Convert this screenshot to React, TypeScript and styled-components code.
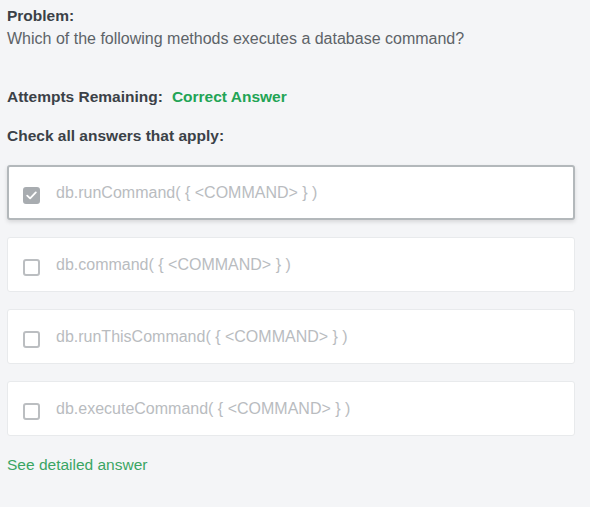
import React from 'react';
import styled, { createGlobalStyle } from 'styled-components';

const GlobalStyle = createGlobalStyle`
  html, body {
    margin: 0;
    padding: 0;
    background: #f4f5f7;
  }
  body {
    font-family: "Liberation Sans", Arial, sans-serif;
  }
`;

interface Option {
  id: string;
  label: string;
  checked: boolean;
}

const options: Option[] = [
  { id: 'a', label: 'db.runCommand( { <COMMAND> } )', checked: true },
  { id: 'b', label: 'db.command( { <COMMAND> } )', checked: false },
  { id: 'c', label: 'db.runThisCommand( { <COMMAND> } )', checked: false },
  { id: 'd', label: 'db.executeCommand( { <COMMAND> } )', checked: false },
];

const Page = styled.div`
  width: 590px;
  height: 507px;
  box-sizing: border-box;
  padding: 6px 15px 0 7px;
  background: #f4f5f7;
`;

const Label = styled.div`
  font-size: 15.5px;
  font-weight: 700;
  color: #3b4147;
  line-height: 20px;
`;

const Question = styled.div`
  font-size: 16px;
  color: #5d6368;
  line-height: 20px;
  margin-top: 3px;
`;

const Attempts = styled.div`
  display: flex;
  gap: 9px;
  margin-top: 38px;
  font-size: 15.5px;
  font-weight: 700;
  line-height: 20px;
  color: #3b4147;
`;

const Correct = styled.span`
  color: #22a455;
`;

const Instruction = styled(Label)`
  margin-top: 19px;
`;

const OptionList = styled.div`
  display: flex;
  flex-direction: column;
  gap: 17px;
  margin-top: 19px;
`;

const Card = styled.div<{ $selected: boolean }>`
  display: flex;
  align-items: center;
  gap: 16px;
  height: 55px;
  box-sizing: border-box;
  background: #ffffff;
  border-radius: 3px;
  padding-left: ${(p) => (p.$selected ? '14px' : '15px')};
  border: ${(p) => (p.$selected ? '2px solid #b3b8bb' : '1px solid #e8eaec')};
  box-shadow: ${(p) => (p.$selected ? '0 2px 4px rgba(0,0,0,0.12)' : 'none')};
`;

const Box = styled.span<{ $checked: boolean }>`
  display: inline-flex;
  align-items: center;
  justify-content: center;
  width: 17px;
  height: 17px;
  margin-top: 6px;
  box-sizing: border-box;
  border-radius: 3px;
  flex-shrink: 0;
  border: 2px solid ${(p) => (p.$checked ? '#a8acb0' : '#bbbec1')};
  background: ${(p) => (p.$checked ? '#a8acb0' : '#ffffff')};
`;

const OptionText = styled.span`
  font-size: 16px;
  color: #b9bcbf;
`;

const DetailLink = styled.a`
  display: block;
  margin-top: 20px;
  font-size: 15.5px;
  color: #3aa563;
  text-decoration: none;
`;

const Check = () => (
  <svg width="11" height="9" viewBox="0 0 11 9">
    <path d="M1.2 4.6 L4.1 7.4 L9.8 1.4" fill="none" stroke="#ffffff" strokeWidth="1.8" strokeLinecap="round" strokeLinejoin="round" />
  </svg>
);

export default function App() {
  return (
    <>
      <GlobalStyle />
      <Page>
        <Label>Problem:</Label>
        <Question>Which of the following methods executes a database command?</Question>
        <Attempts>
          <span>Attempts Remaining:</span>
          <Correct>Correct Answer</Correct>
        </Attempts>
        <Instruction>Check all answers that apply:</Instruction>
        <OptionList>
          {options.map((o) => (
            <Card key={o.id} $selected={o.checked}>
              <Box $checked={o.checked}>{o.checked && <Check />}</Box>
              <OptionText>{o.label}</OptionText>
            </Card>
          ))}
        </OptionList>
        <DetailLink href="#">See detailed answer</DetailLink>
      </Page>
    </>
  );
}
